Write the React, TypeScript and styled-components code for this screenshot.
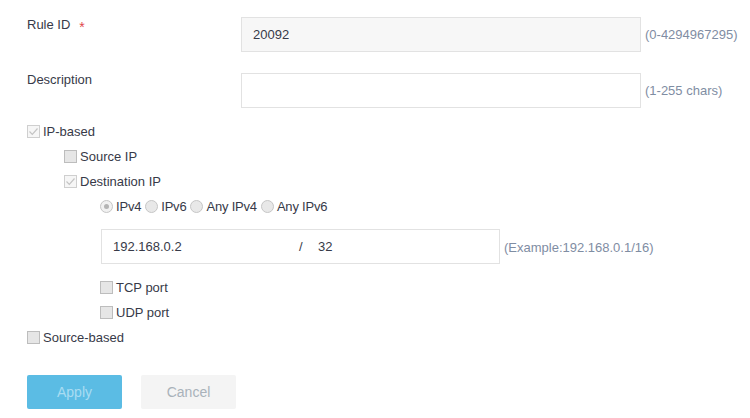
import React from "react";
import styled, { createGlobalStyle } from "styled-components";

const GlobalStyle = createGlobalStyle`
  body {
    margin: 0;
    background: #ffffff;
    font-family: "Liberation Sans", Arial, sans-serif;
    font-size: 13px;
    color: #373a48;
  }
`;

const Page = styled.div`
  width: 750px;
  height: 418px;
  box-sizing: border-box;
  padding: 16px 0 0 27px;
  overflow: hidden;
`;

const FieldRow = styled.div<{ $first?: boolean }>`
  display: grid;
  grid-template-columns: 214px 400px auto;
  align-items: start;
  margin-top: ${(p) => (p.$first ? "0" : "20px")};
`;

const Label = styled.div`
  line-height: 16px;
  color: #373a48;
`;

const Required = styled.span`
  color: #e0474c;
  margin-left: 9px;
  font-size: 14px;
  position: relative;
  top: 3px;
`;

const TextBox = styled.input<{ $disabled?: boolean }>`
  box-sizing: border-box;
  width: 400px;
  height: 35px;
  margin: 1px 0 0 0;
  padding: 0 11px;
  border: 1px solid #e2e2e2;
  background: ${(p) => (p.$disabled ? "#f7f7f7" : "#ffffff")};
  font-family: inherit;
  font-size: 13px;
  color: #373a48;
  outline: none;
`;

const Hint = styled.span`
  align-self: center;
  margin-left: 4px;
  margin-top: 1px;
  color: #7f8da3;
  white-space: nowrap;
`;

const Options = styled.div`
  margin-top: 11px;
  display: flex;
  flex-direction: column;
`;

const indent = [0, 37, 73];

const OptionRow = styled.div<{ $level: number }>`
  display: flex;
  align-items: center;
  height: 25px;
  padding-left: ${(p) => indent[p.$level]}px;
  color: #373a48;
`;

const Box = styled.span<{ $checked?: boolean }>`
  box-sizing: border-box;
  width: 13px;
  height: 13px;
  margin-right: 3px;
  border: 1px solid ${(p) => (p.$checked ? "#cfcfcf" : "#bdbdbd")};
  background: ${(p) => (p.$checked ? "#f6f6f6" : "#e6e6e6")};
  display: flex;
  align-items: center;
  justify-content: center;
  flex-shrink: 0;
`;

const Radio = styled.span<{ $checked?: boolean }>`
  box-sizing: border-box;
  width: 13px;
  height: 13px;
  border-radius: 50%;
  margin-right: 3px;
  border: 1px solid #c6c6c6;
  background: ${(p) => (p.$checked ? "#f1f1f1" : "#e8e8e8")};
  display: flex;
  align-items: center;
  justify-content: center;
  flex-shrink: 0;
  &::after {
    content: "";
    display: ${(p) => (p.$checked ? "block" : "none")};
    width: 5px;
    height: 5px;
    border-radius: 50%;
    background: #b4b4b4;
  }
`;

const RadioLabel = styled.span`
  margin-right: 4px;
  letter-spacing: -0.2px;
`;

const IpLine = styled.div`
  display: flex;
  align-items: center;
  margin: 10px 0 11px 74px;
`;

const IpBox = styled.div`
  box-sizing: border-box;
  width: 399px;
  height: 35px;
  border: 1px solid #e2e2e2;
  display: flex;
  align-items: center;
  padding-left: 11px;
  color: #373a48;
`;

const IpAddr = styled.span`
  width: 186px;
`;

const Slash = styled.span`
  width: 19px;
`;

const Actions = styled.div`
  display: flex;
  gap: 19px;
  margin-top: 25px;
`;

const Button = styled.button<{ $primary?: boolean }>`
  width: 95px;
  height: 34px;
  border: none;
  border-radius: 2px;
  background: ${(p) => (p.$primary ? "#5bbce4" : "#f4f4f4")};
  color: ${(p) => (p.$primary ? "#a9dcf2" : "#a9b2ba")};
  font-family: inherit;
  font-size: 14px;
  cursor: default;
`;

const Check = () => (
  <svg width="11" height="11" viewBox="0 0 11 11">
    <polyline
      points="1.5,5.5 4.3,8.3 9.5,2.5"
      fill="none"
      stroke="#c4c4c4"
      strokeWidth="1.2"
    />
  </svg>
);

const CheckOption: React.FC<{ level: number; checked?: boolean; label: string }> = ({
  level,
  checked,
  label,
}) => (
  <OptionRow $level={level}>
    <Box $checked={checked}>{checked && <Check />}</Box>
    <span>{label}</span>
  </OptionRow>
);

const App: React.FC = () => {
  const radios = [
    { label: "IPv4", checked: true },
    { label: "IPv6" },
    { label: "Any IPv4" },
    { label: "Any IPv6" },
  ];

  return (
    <>
      <GlobalStyle />
      <Page>
        <FieldRow $first>
          <Label>
            Rule ID<Required>*</Required>
          </Label>
          <TextBox $disabled readOnly value="20092" />
          <Hint>(0-4294967295)</Hint>
        </FieldRow>
        <FieldRow>
          <Label>Description</Label>
          <TextBox readOnly value="" />
          <Hint>(1-255 chars)</Hint>
        </FieldRow>

        <Options>
          <CheckOption level={0} checked label="IP-based" />
          <CheckOption level={1} label="Source IP" />
          <CheckOption level={1} checked label="Destination IP" />
          <OptionRow $level={2}>
            {radios.map((r) => (
              <React.Fragment key={r.label}>
                <Radio $checked={r.checked} />
                <RadioLabel>{r.label}</RadioLabel>
              </React.Fragment>
            ))}
          </OptionRow>
          <IpLine>
            <IpBox>
              <IpAddr>192.168.0.2</IpAddr>
              <Slash>/</Slash>
              <span>32</span>
            </IpBox>
            <Hint>(Example:192.168.0.1/16)</Hint>
          </IpLine>
          <CheckOption level={2} label="TCP port" />
          <CheckOption level={2} label="UDP port" />
          <CheckOption level={0} label="Source-based" />
        </Options>

        <Actions>
          <Button $primary>Apply</Button>
          <Button>Cancel</Button>
        </Actions>
      </Page>
    </>
  );
};

export default App;
